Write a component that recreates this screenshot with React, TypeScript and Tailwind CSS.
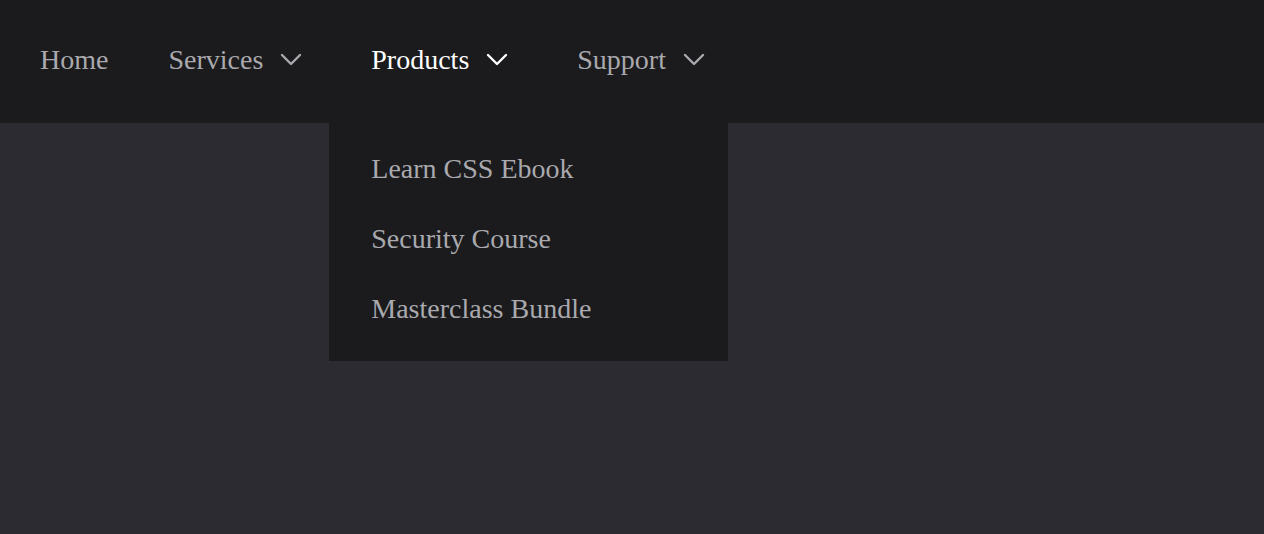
import React from 'react';

const Chevron = ({ className }: { className?: string }) => (
  <svg width="22" height="13" viewBox="0 0 22 13" fill="none" className={className}>
    <polyline points="2,2 11,11 20,2" stroke="currentColor" strokeWidth="2.4" strokeLinecap="round" strokeLinejoin="round" />
  </svg>
);

const products = ['Learn CSS Ebook', 'Security Course', 'Masterclass Bundle'];

export default function App() {
  return (
    <div className="min-h-screen bg-[#2c2b32] font-['Liberation_Serif',serif] text-[28px]">
      <nav className="h-[123px] bg-[#1b1b1d] flex items-stretch text-[#a9a9ae]">
        <a className="ml-[40px] flex items-center pb-[4px]">Home</a>

        <div className="ml-[60px] flex items-center gap-[17px] pb-[4px]">
          <span>Services</span>
          <Chevron />
        </div>

        {/* open dropdown */}
        <div className="relative ml-[69px] flex items-center gap-[17px] pb-[4px] text-white">
          <span>Products</span>
          <Chevron />
          <ul className="absolute left-[-42px] top-full w-[399px] bg-[#1b1b1d] pt-[11px] pb-[17px] text-[#a9a9ae]">
            {products.map((p) => (
              <li key={p} className="h-[70px] flex items-center pl-[42px]">
                {p}
              </li>
            ))}
          </ul>
        </div>

        <div className="ml-[69px] flex items-center gap-[17px] pb-[4px]">
          <span>Support</span>
          <Chevron />
        </div>
      </nav>
    </div>
  );
}
